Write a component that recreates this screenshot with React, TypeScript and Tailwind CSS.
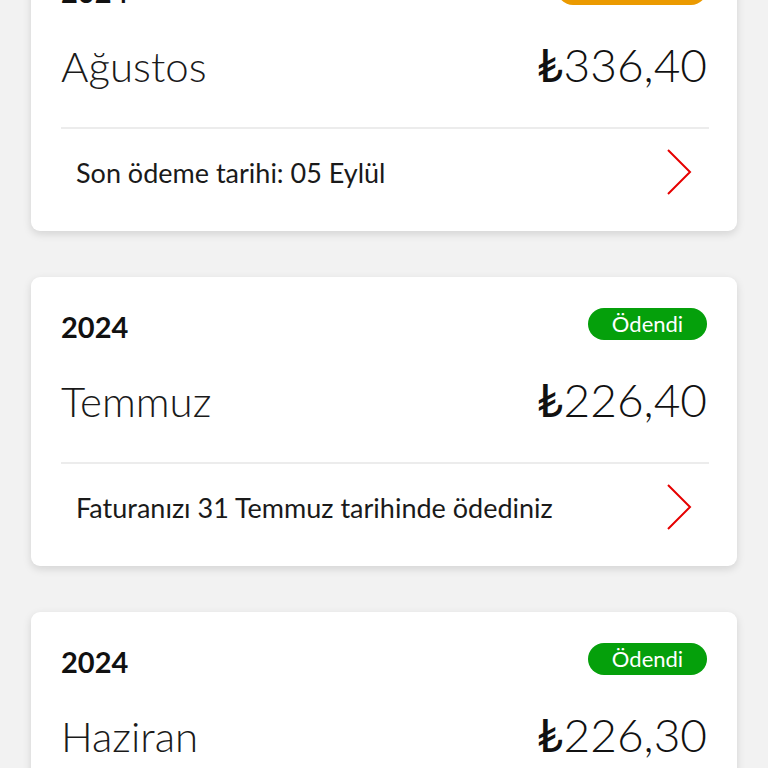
import React from 'react';

type Bill = {
  year: string;
  month: string;
  amount: string;
  status: string;
  statusClass: string;
  note: string;
};

const bills: Bill[] = [
  { year: '2024', month: 'Ağustos', amount: '336,40', status: 'Ödenmedi', statusClass: 'bg-[#eb9a00] w-[150px]', note: 'Son ödeme tarihi: 05 Eylül' },
  { year: '2024', month: 'Temmuz', amount: '226,40', status: 'Ödendi', statusClass: 'bg-[#05a00b] w-[119px]', note: 'Faturanızı 31 Temmuz tarihinde ödediniz' },
  { year: '2024', month: 'Haziran', amount: '226,30', status: 'Ödendi', statusClass: 'bg-[#05a00b] w-[119px]', note: 'Faturanızı 30 Haziran tarihinde ödediniz' },
];

function Chevron() {
  return (
    <svg width="26" height="46" viewBox="0 0 26 46" fill="none">
      <path d="M2 1 L24 23 L2 45" stroke="#e60000" strokeWidth="2" strokeLinejoin="miter" />
    </svg>
  );
}

function BillCard({ bill }: { bill: Bill }) {
  return (
    <div className="h-[289px] rounded-[9px] bg-white px-[30px] pt-[31px] shadow-[0_3px_8px_rgba(0,0,0,0.13)]">
      <div className="flex h-[32px] items-center justify-between">
        <span className="mt-[5px] text-[29px] font-bold leading-none text-[#111]">{bill.year}</span>
        <span className={`flex h-[32px] items-center justify-center rounded-full text-[22px] leading-none text-white ${bill.statusClass}`}>
          {bill.status}
        </span>
      </div>
      <div className="mt-[37px] flex h-[60px] items-baseline justify-between">
        <span className="text-[42px] font-light leading-none text-[#1a1a1a]">{bill.month}</span>
        <span className="text-[46px] font-light leading-none text-[#111]">
          <span className="font-normal">₺</span>
          {bill.amount}
        </span>
      </div>
      <div className="mt-[25px] mr-[-2px] h-[2px] bg-[#ececec]" />
      <div className="flex h-[90px] items-center justify-between pl-[15px] pr-[15px] pb-[4px]">
        <span className="text-[27px] leading-none text-[#1a1a1a]">{bill.note}</span>
        <Chevron />
      </div>
    </div>
  );
}

export default function App() {
  return (
    <div className="h-[768px] overflow-hidden bg-[#f2f2f2] px-[31px] font-['Lato','Open_Sans',sans-serif]">
      <div className="mt-[-58px] flex flex-col gap-[46px]">
        {bills.map((b) => (
          <BillCard key={b.month} bill={b} />
        ))}
      </div>
    </div>
  );
}
